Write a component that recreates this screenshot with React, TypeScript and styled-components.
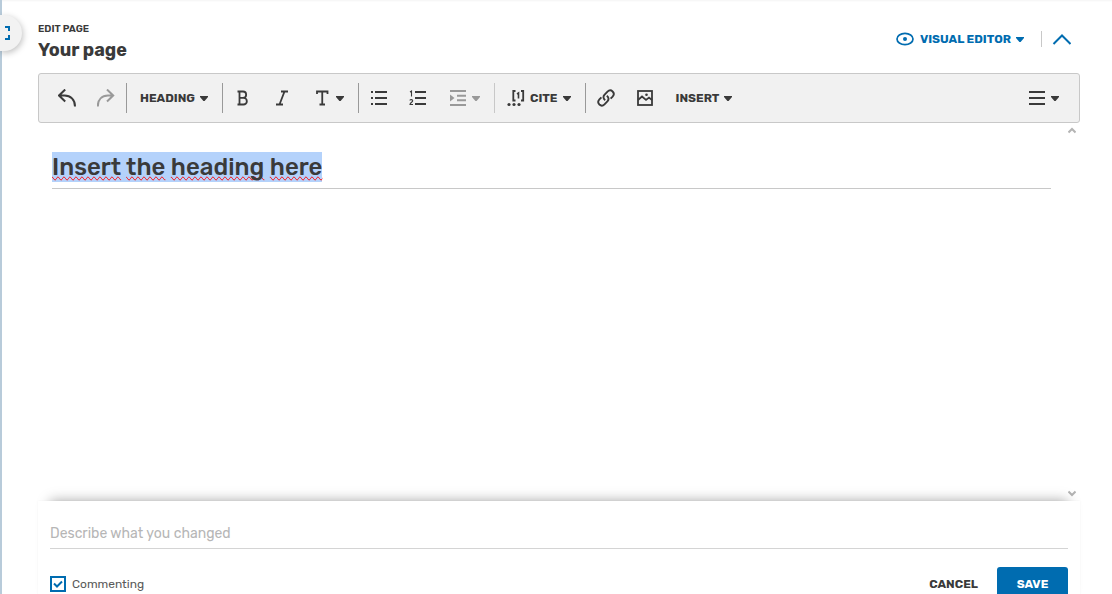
import React from "react";
import styled, { createGlobalStyle, css } from "styled-components";

const ink = "#3a3a3a";
const blue = "#006cb0";

const GlobalStyle = createGlobalStyle`
  * { box-sizing: border-box; }
  body {
    margin: 0;
    overflow: hidden;
    background: #fff;
    color: ${ink};
    font-family: Rubik, Inter, "Liberation Sans", sans-serif;
  }
  button, input { font: inherit; color: inherit; }
  button { border: 0; background: none; padding: 0; cursor: pointer; }
`;

const Page = styled.div`
  position: relative;
  display: flex;
  flex-direction: column;
  height: 100vh;
  padding: 22px 32px 0 36px;
  border-left: 2px solid #b8cbda;
  box-shadow: inset 0 2px 2px -1px #f4f4f4;
`;

const ExpandTab = styled.button`
  position: absolute;
  top: 15px;
  left: -2px;
  display: flex;
  align-items: center;
  width: 22px;
  height: 36px;
  padding-left: 4px;
  border-radius: 0 18px 18px 0;
  background: #f2f2f2;
  box-shadow: 1px 2px 6px rgba(0, 0, 0, 0.25);
`;

const Header = styled.header`
  display: flex;
  flex: none;
  justify-content: space-between;
  height: 51px;
`;

const Kicker = styled.p`
  margin: 0;
  font-size: 10px;
  line-height: 14px;
  font-weight: 600;
`;

const Title = styled.h1`
  margin: 0;
  font-size: 18px;
  line-height: 28px;
  font-weight: 700;
`;

const HeaderActions = styled.div`
  display: flex;
  align-items: center;
  height: 34px;
  padding-right: 9px;
  color: ${blue};
`;

const ModeButton = styled.button`
  display: flex;
  align-items: center;
  gap: 5px;
  padding-right: 17px;
  font-size: 12px;
  line-height: 16px;
  font-weight: 700;
  svg:first-child { margin-right: 1px; }
`;

const CollapseButton = styled.button`
  display: flex;
  height: 16px;
  align-items: center;
  padding-left: 10px;
  border-left: 1px solid #c8c8c8;
`;

const Toolbar = styled.div`
  display: flex;
  align-items: center;
  flex: none;
  height: 50px;
  padding: 0 7px 0 8px;
  border: 1px solid #c8c8c8;
  border-radius: 3px;
  background: #f1f1f1;
`;

const Divider = styled.span<{ $light?: boolean }>`
  width: 1px;
  height: 30px;
  margin: 0 1px;
  background: ${(p) => (p.$light ? "#c8c8c8" : "#999")};
`;

const Tool = styled.button<{ $kind?: "icon" | "label" | "menu" }>`
  display: flex;
  align-items: center;
  height: 40px;
  gap: 5px;
  font-size: 12px;
  line-height: 16px;
  font-weight: 700;
  &:disabled { color: #999; }
  ${(p) =>
    p.$kind === "label"
      ? css`padding: 0 13px 0 12px;`
      : p.$kind === "menu"
      ? css`padding: 0 13px 0 11px;`
      : css`width: 39px; justify-content: center;`}
`;

const Spacer = styled.span`
  flex: 1;
`;

const Editor = styled.main`
  display: flex;
  flex: 1 0 auto;
  min-height: 378px;
`;

const Document = styled.article`
  flex: 1;
  padding: 29px 13px 0 14px;
`;

const DocHeading = styled.h2`
  margin: 0;
  padding-bottom: 6px;
  border-bottom: 1px solid #c8c8c8;
  font-size: 24px;
  line-height: 30px;
  font-weight: 500;
`;

const Selection = styled.span`
  display: inline-block;
  background: #b4d2fb;
`;

const Misspelled = styled.span`
  text-decoration-line: spelling-error;
`;

const ScrollTrack = styled.div`
  display: flex;
  flex-direction: column;
  justify-content: space-between;
  align-items: center;
  width: 16px;
  padding: 4px 0;
  color: #b4b4b4;
  button { display: flex; }
`;

const Footer = styled.footer`
  flex: none;
  padding: 16px 12px;
  background: #fff;
  box-shadow: 0 -12px 12px -12px rgba(0, 0, 0, 0.36), 0 0 2px rgba(0, 0, 0, 0.04);
`;

const Summary = styled.input`
  display: block;
  width: 100%;
  height: 32px;
  padding: 2px 0 0;
  border: 0;
  border-bottom: 1px solid #d4d4d4;
  border-radius: 0;
  background: none;
  outline: none;
  font-size: 14px;
  &::placeholder { color: #b6b6b6; opacity: 1; }
`;

const FooterRow = styled.div`
  display: flex;
  align-items: center;
  justify-content: space-between;
  padding-top: 18px;
`;

const CheckLabel = styled.label`
  display: flex;
  align-items: center;
  gap: 6px;
  font-size: 12px;
  line-height: 16px;
  color: #5a5a5a;
`;

const CheckBox = styled.span`
  display: grid;
  color: ${blue};
  > * { grid-area: 1 / 1; }
  svg { pointer-events: none; visibility: hidden; }
  input:checked + svg { visibility: visible; }
`;

const CheckInput = styled.input`
  appearance: none;
  width: 16px;
  height: 16px;
  margin: 0;
  border: 2px solid ${blue};
`;

const Actions = styled.div`
  display: flex;
  align-items: center;
  gap: 19px;
`;

const Action = styled.button<{ $primary?: boolean }>`
  font-size: 12px;
  line-height: 16px;
  font-weight: 700;
  ${(p) =>
    p.$primary &&
    css`
      min-width: 71px;
      height: 34px;
      border-radius: 3px;
      background: ${blue};
      color: #fff;
    `}
`;

const Caret = () => (
  <svg width="8" height="5" viewBox="0 0 8 5" aria-hidden="true">
    <path d="M0 0h8v1L4.6 5H3.4L0 1z" fill="currentColor" />
  </svg>
);

const Icon = ({ children }: { children: React.ReactNode }) => (
  <svg width="18" height="18" viewBox="0 0 18 18" fill="none" stroke="currentColor" strokeWidth="2" aria-hidden="true">
    {children}
  </svg>
);

const Lines = ({ from, to = 17 }: { from: number; to?: number }) => (
  <path d={`M${from} 3H${to}M${from} 9H${to}M${from} 15H${to}`} />
);

export default function App() {
  return (
    <>
      <GlobalStyle />
      <Page>
        <ExpandTab aria-label="Expand">
          <svg width="7" height="14" viewBox="0 0 7 14" fill="none" stroke={blue} strokeWidth="2" aria-hidden="true">
            <path d="M1 1h4v4M1 13h4V9" />
          </svg>
        </ExpandTab>
        <Header>
          <div>
            <Kicker>EDIT PAGE</Kicker>
            <Title>Your page</Title>
          </div>
          <HeaderActions>
            <ModeButton>
              <svg width="18" height="14" viewBox="0 0 18 14" fill="none" stroke="currentColor" strokeWidth="1.7" aria-hidden="true">
                <ellipse cx="9" cy="7" rx="8" ry="5.7" />
                <circle cx="9" cy="7" r="2" fill="currentColor" stroke="none" />
              </svg>
              VISUAL EDITOR
              <Caret />
            </ModeButton>
            <CollapseButton aria-label="Collapse">
              <svg width="19" height="11" viewBox="0 0 19 11" fill="none" stroke="currentColor" strokeWidth="2" aria-hidden="true">
                <path d="M1.500 10l8.500-8.500 8.500 8.500" />
              </svg>
            </CollapseButton>
          </HeaderActions>
        </Header>

        <Toolbar role="toolbar" aria-label="Formatting">
          <Tool aria-label="Undo">
            <Icon><path d="M7.200 .5L1 6.500l6.200 6M1 6.500H6.500C12.500 6.500 17 10.500 17 17.500" /></Icon>
          </Tool>
          <Tool aria-label="Redo" disabled>
            <Icon><path d="M10 .5l6.200 6-6.200 6M16.200 6.500H11C5 6.500 .8 10.500 .8 17.500" /></Icon>
          </Tool>
          <Divider />
          <Tool $kind="label">HEADING<Caret /></Tool>
          <Divider />
          <Tool aria-label="Bold">
            <Icon><path d="M3.500 2.500H9a3 3 0 0 1 0 6.300H5.500M5.500 2.500v13M3.500 15.500h6a3.350 3.350 0 0 0 0-6.700" strokeWidth="1.800" /></Icon>
          </Tool>
          <Tool aria-label="Italic">
            <Icon><path d="M8 2.500h7M3 15.500h7M11.500 2.500l-5 13" strokeWidth="1.800" /></Icon>
          </Tool>
          <Tool $kind="menu" aria-label="Text style">
            <Icon><path d="M4 5V2.500h10.500V5M9.250 2.500v13M6.500 15.500H12" strokeWidth="1.800" /></Icon>
            <Caret />
          </Tool>
          <Divider />
          <Tool aria-label="Bulleted list">
            <Icon><Lines from={5} /><path d="M1 3h2M1 9h2M1 15h2" /></Icon>
          </Tool>
          <Tool aria-label="Numbered list">
            <Icon>
              <Lines from={6} />
              <path d="M1 3l1.500-1V7.500M1 11.500c0-1.200 2.700-1.200 2.700.2 0 1.200-2.500 2-2.700 3.800h3" strokeWidth="1.100" />
            </Icon>
          </Tool>
          <Tool $kind="menu" aria-label="Indent" disabled>
            <Icon>
              <path d="M1 2h16M8 6.700h9M8 11.300h9M1 16h16" />
              <path d="M1 5.500v7L5.500 9z" fill="currentColor" stroke="none" />
            </Icon>
            <Caret />
          </Tool>
          <Divider $light />
          <Tool $kind="menu">
            <Icon>
              <path d="M8.500 2H6.300v9.500h2.200M14 2h2.200v9.500H14" strokeWidth="1.800" />
              <path d="M10 5l1.500-1v5.500" strokeWidth="1.600" />
              <g fill="currentColor" stroke="none">
                <circle cx="2" cy="15.500" r="1.600" />
                <circle cx="7" cy="15.500" r="1.600" />
                <circle cx="12" cy="15.500" r="1.600" />
              </g>
            </Icon>
            CITE
            <Caret />
          </Tool>
          <Divider />
          <Tool aria-label="Link">
            <Icon>
              <path d="M8.200 11.200C6.200 9.800 6 7.400 7.400 5.900L10.500 2.700c1.500-1.500 3.700-1.500 5.100-.2 1.400 1.400 1.400 3.600 0 5.100l-2 2M9.800 6.800c2 1.400 2.200 3.800.8 5.300l-3.100 3.200c-1.500 1.500-3.700 1.500-5.100.2-1.400-1.400-1.400-3.600 0-5.100l2-2" strokeWidth="1.900" />
            </Icon>
          </Tool>
          <Tool aria-label="Image">
            <Icon>
              <rect x="2" y="2" width="14" height="14" strokeWidth="1.800" />
              <path d="M2 11l4-3.500 4 3.500 3-2.500 3 2.500" strokeWidth="1.700" />
              <circle cx="10.500" cy="5.800" r="1.300" fill="currentColor" stroke="none" />
            </Icon>
          </Tool>
          <Tool $kind="menu">INSERT<Caret /></Tool>
          <Spacer />
          <Tool $kind="menu" aria-label="Page options">
            <Icon><Lines from={1} /></Icon>
            <Caret />
          </Tool>
        </Toolbar>

        <Editor>
          <Document>
            <DocHeading>
              <Selection>
                <Misspelled>Insert</Misspelled> <Misspelled>the</Misspelled> <Misspelled>heading</Misspelled>{" "}
                <Misspelled>here</Misspelled>
              </Selection>
            </DocHeading>
          </Document>
          <ScrollTrack>
            <button aria-label="Scroll up">
              <svg width="8" height="7" viewBox="0 0 8 7" fill="none" stroke="currentColor" strokeWidth="2" aria-hidden="true">
                <path d="M.5 5.500L4 2l3.500 3.500" />
              </svg>
            </button>
            <button aria-label="Scroll down">
              <svg width="8" height="7" viewBox="0 0 8 7" fill="none" stroke="currentColor" strokeWidth="2" aria-hidden="true">
                <path d="M.5 1.500L4 5l3.500-3.500" />
              </svg>
            </button>
          </ScrollTrack>
        </Editor>

        <Footer>
          <Summary aria-label="Describe what you changed" placeholder="Describe what you changed" />
          <FooterRow>
            <CheckLabel>
              <CheckBox>
                <CheckInput type="checkbox" defaultChecked />
                <svg width="16" height="16" viewBox="0 0 16 16" fill="none" stroke="currentColor" strokeWidth="2" aria-hidden="true">
                  <path d="M4 7.500L7 10.500l5-5" />
                </svg>
              </CheckBox>
              Commenting
            </CheckLabel>
            <Actions>
              <Action>CANCEL</Action>
              <Action $primary>SAVE</Action>
            </Actions>
          </FooterRow>
        </Footer>
      </Page>
    </>
  );
}
